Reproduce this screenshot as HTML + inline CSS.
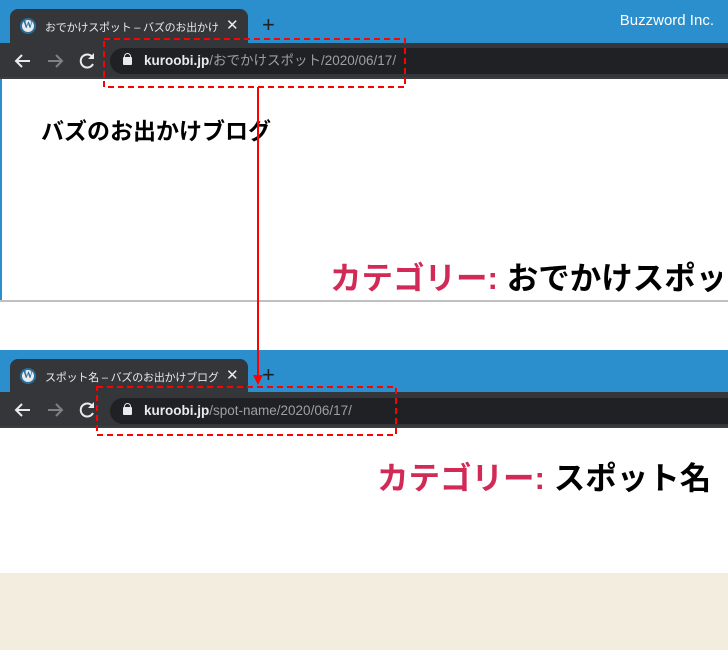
<!DOCTYPE html>
<html><head><meta charset="utf-8"><style>
*{margin:0;padding:0;box-sizing:border-box}
body{width:728px;height:650px;position:relative;background:#fff;overflow:hidden;font-family:"Liberation Sans","Noto Sans CJK JP",sans-serif}
.abs{position:absolute}
.blue{background:#2a8fcc}
.tab{background:#35363a;border-radius:8px 8px 0 0;color:#e8eaed;font-size:11px}
.tool{background:#35363a}
.addr{background:#202124;border-radius:13px;color:#9aa0a6;font-size:13.5px;line-height:26px;padding-left:34px}
.addr b{color:#e8eaed;font-weight:bold}
.wp{width:16px;height:16px;border-radius:50%;background:#e8eaed;border:2px solid #2a6f9a;color:#2a6f9a;font-size:10px;font-weight:bold;text-align:center;line-height:12px;font-family:"Liberation Serif",serif}
.h{font-family:"Liberation Sans","Noto Sans CJK JP",sans-serif;font-weight:bold;font-size:31.5px;white-space:nowrap;overflow:hidden}
.h span{color:#d12a57}
.tt{white-space:nowrap;overflow:hidden;letter-spacing:-0.2px}
</style></head><body>
<div class="abs blue" style="left:0;top:0;width:728px;height:44px"></div>
<div class="abs" style="right:14px;top:12px;color:#fff;font-size:15px">Buzzword Inc.</div>
<div class="abs tab" style="left:10px;top:9px;width:238px;height:36px">
 <div class="abs wp" style="left:10px;top:9px">W</div>
 <div class="abs tt" style="left:35px;top:10px;width:174px">おでかけスポット – バズのお出かけブログ</div>
 <div class="abs" style="left:216px;top:7px;font-size:15px">✕</div>
</div>
<div class="abs" style="left:262px;top:12px;font-size:22px;color:#202124">+</div>
<div class="abs tool" style="left:0;top:43px;width:728px;height:36px"></div>
<div class="abs" style="left:0;top:77px;width:728px;height:2px;background:#3c3d41"></div>
<svg class="abs" style="left:0;top:43px" width="100" height="36" fill="none" stroke-width="2">
 <path d="M30 18H16M22 12l-6 6 6 6" stroke="#e8eaed"/>
 <path d="M48 18h14M56 12l6 6-6 6" stroke="#7e8186"/>
 <path d="M93 15a6.5 6.5 0 1 0 0 6" stroke="#e8eaed"/><path d="M94 10v6h-6z" fill="#e8eaed" stroke="none"/>
</svg>
<div class="abs addr" style="left:110px;top:48px;width:640px;height:26px"><div class="abs" style="left:13px;top:9px;width:9px;height:8px;background:#e8eaed;border-radius:1px"></div><div class="abs" style="left:14px;top:5px;width:7px;height:7px;border:1.5px solid #e8eaed;border-radius:4px 4px 0 0"></div><b>kuroobi.jp</b>/おでかけスポット/2020/06/17/</div>
<div class="abs" style="left:0;top:79px;width:2px;height:221px;background:#2a8fcc"></div>
<div class="abs" style="left:41px;top:112px;font-size:23px;font-weight:bold;color:#000">バズのお出かけブログ</div>
<div class="abs h" style="left:330px;top:253px;width:392px"><span>カテゴリー:</span> おでかけスポット</div>
<div class="abs" style="left:0;top:300px;width:728px;height:2px;background:#c0c0c0"></div>
<div class="abs blue" style="left:0;top:350px;width:728px;height:42px"></div>
<div class="abs tab" style="left:10px;top:359px;width:238px;height:34px">
 <div class="abs wp" style="left:10px;top:9px">W</div>
 <div class="abs tt" style="left:35px;top:10px;width:174px">スポット名 – バズのお出かけブログ</div>
 <div class="abs" style="left:216px;top:7px;font-size:15px">✕</div>
</div>
<div class="abs" style="left:262px;top:362px;font-size:22px;color:#202124">+</div>
<div class="abs tool" style="left:0;top:392px;width:728px;height:36px"></div>
<div class="abs" style="left:0;top:426px;width:728px;height:2px;background:#3c3d41"></div>
<svg class="abs" style="left:0;top:392px" width="100" height="36" fill="none" stroke-width="2">
 <path d="M30 18H16M22 12l-6 6 6 6" stroke="#e8eaed"/>
 <path d="M48 18h14M56 12l6 6-6 6" stroke="#7e8186"/>
 <path d="M93 15a6.5 6.5 0 1 0 0 6" stroke="#e8eaed"/><path d="M94 10v6h-6z" fill="#e8eaed" stroke="none"/>
</svg>
<div class="abs addr" style="left:110px;top:398px;width:640px;height:26px"><div class="abs" style="left:13px;top:9px;width:9px;height:8px;background:#e8eaed;border-radius:1px"></div><div class="abs" style="left:14px;top:5px;width:7px;height:7px;border:1.5px solid #e8eaed;border-radius:4px 4px 0 0"></div><b>kuroobi.jp</b>/spot-name/2020/06/17/</div>
<div class="abs h" style="left:377px;top:453px"><span>カテゴリー:</span> スポット名</div>
<div class="abs" style="left:0;top:573px;width:728px;height:77px;background:#f3ede0"></div>
<svg class="abs" style="left:0;top:0" width="728" height="650">
 <rect x="104" y="39" width="301" height="48" fill="none" stroke="#f00" stroke-width="2" stroke-dasharray="6,4"/>
 <rect x="97" y="387" width="299" height="48" fill="none" stroke="#f00" stroke-width="2" stroke-dasharray="6,4"/>
 <line x1="258" y1="87" x2="258" y2="376" stroke="#f00" stroke-width="2"/>
 <polygon points="253,375 263,375 258,385" fill="#f00"/>
</svg>
</body></html>
